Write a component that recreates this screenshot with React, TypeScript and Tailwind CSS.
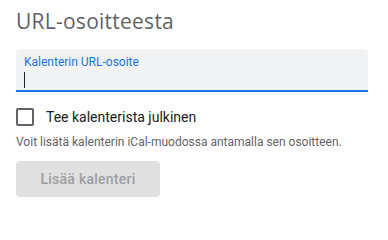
import React from 'react'

export default function App() {
  return (
    <div className="w-[388px] h-[212px] bg-white px-4 pt-[7px] font-['Roboto',sans-serif]">
      {/* Heading */}
      <h2 className="font-['Open_Sans',sans-serif] text-[21px] leading-[28px] tracking-[0.25px] text-[#5f6368] font-normal">
        URL-osoitteesta
      </h2>

      {/* Text field */}
      <div className="mt-[14px] h-[43px] w-[352px] rounded-t-[4px] bg-[#f1f3f4] border-b-2 border-[#1a73e8] px-2 pt-[5px]">
        <div className="text-[12px] leading-[16px] text-[#1a73e8]">Kalenterin URL-osoite</div>
        <div className="mt-[2px] h-[16px] w-px bg-[#202124]"></div>
      </div>

      {/* Checkbox */}
      <label className="mt-[16px] flex items-center gap-3">
        <span className="block h-[18px] w-[18px] rounded-[2px] border-2 border-[#5f6368]"></span>
        <span className="text-[14px] leading-[18px] text-[#202124]">Tee kalenterista julkinen</span>
      </label>

      {/* Help text */}
      <p className="mt-[8px] text-[12px] leading-[16px] text-[#5f6368]">
        Voit lisätä kalenterin iCal-muodossa antamalla sen osoitteen.
      </p>

      {/* Button */}
      <button
        disabled
        className="mt-[11px] block h-[36px] w-[144px] rounded-[4px] bg-[#e0e0e0] text-[14px] font-medium text-[#9e9e9e] tracking-[0.25px]"
      >
        Lisää kalenteri
      </button>
    </div>
  )
}
